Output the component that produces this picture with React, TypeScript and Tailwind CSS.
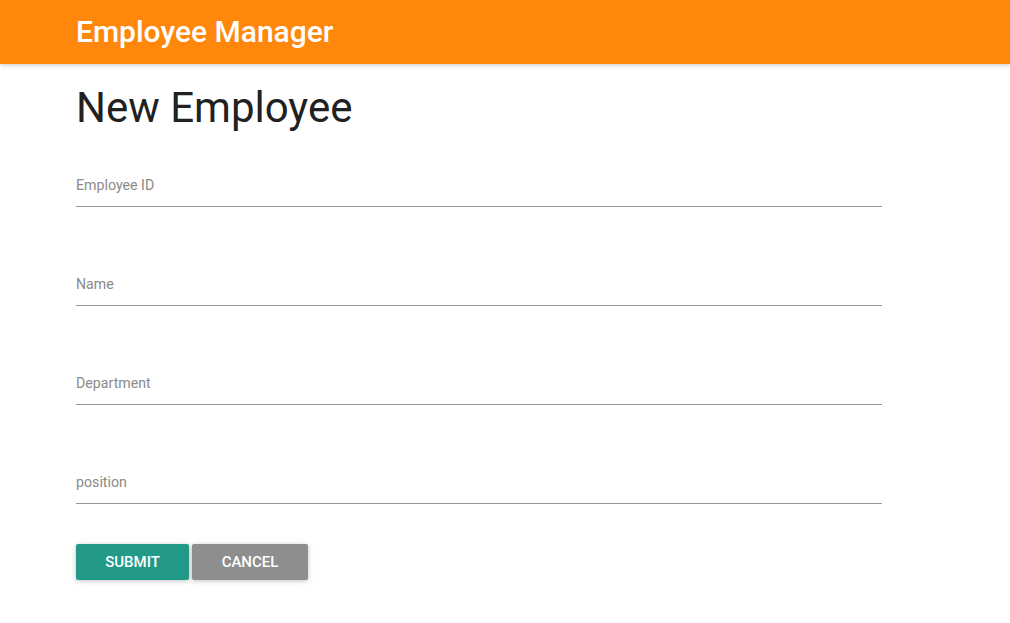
const FIELDS = ["Employee ID", "Name", "Department", "position"];

export default function App() {
  return (
    <div className="min-h-[623px] bg-white" style={{ fontFamily: "Roboto, 'Liberation Sans', sans-serif" }}>
      {/* App bar */}
      <header className="h-16 bg-[#ff880c] flex items-center pl-[76px] shadow-[0_1px_6px_rgba(0,0,0,0.12),0_1px_4px_rgba(0,0,0,0.12)]">
        <h1 className="text-[30px] font-medium text-white leading-none">Employee Manager</h1>
      </header>

      <main className="pl-[76px] w-[882px]">
        <h2 className="mt-5 text-[42px] leading-[48px] text-[#212121]">New Employee</h2>

        <form>
          {FIELDS.map((label, i) => (
            <div key={label} className={i === 0 ? "mt-[45px]" : "mt-[69px]"}>
              <label className="block text-[14.2px] leading-4 text-[#8a8a8a]">{label}</label>
              <div className="mt-[13px] h-px bg-[#959595]" />
            </div>
          ))}

          <div className="mt-[40px] flex gap-[3px]">
            <button
              type="button"
              className="w-[113px] h-9 rounded-[2px] bg-[#239a88] text-white text-[15px] font-medium uppercase shadow-[0_1px_6px_rgba(0,0,0,0.12),0_1px_4px_rgba(0,0,0,0.12)]"
            >
              Submit
            </button>
            <button
              type="button"
              className="w-[116px] h-9 rounded-[2px] bg-[#8e8e8e] text-white text-[15px] font-medium uppercase shadow-[0_1px_6px_rgba(0,0,0,0.12),0_1px_4px_rgba(0,0,0,0.12)]"
            >
              Cancel
            </button>
          </div>
        </form>
      </main>
    </div>
  );
}
